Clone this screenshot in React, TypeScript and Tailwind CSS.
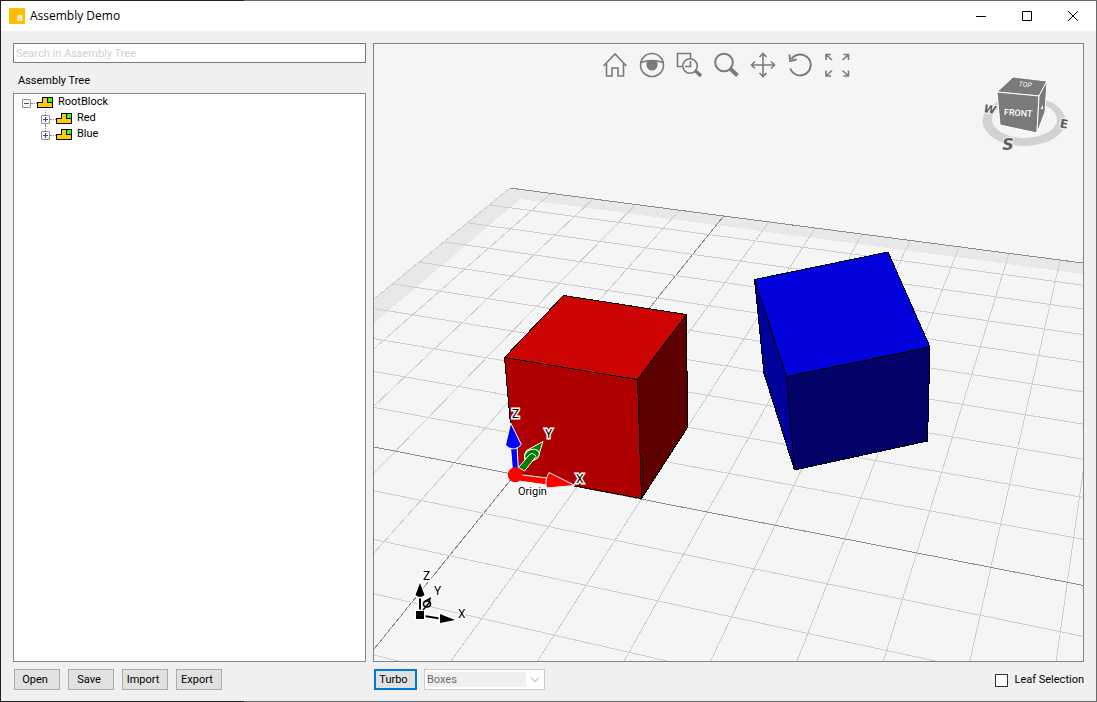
import React, { useState } from "react";

type Point = [number, number];

// perspective of the ground plane: grid units -> canvas units
const project = (x: number, y: number): Point => {
  const w = 1 - 0.01382 * x + 0.04347 * y;
  return [
    (54.29 * x + 52.33 * y + 515) / w,
    (5.43 * x - 16.46 * y + 474.5) / w,
  ];
};

const toPoints = (points: Point[]) => points.map((p) => p.join(",")).join(" ");

const range = (from: number, to: number) =>
  Array.from({ length: to - from + 1 }, (_, i) => from + i);

const GridLine = ({ from, to, color }: { from: Point; to: Point; color: string }) => (
  <line x1={from[0]} y1={from[1]} x2={to[0]} y2={to[1]} stroke={color} />
);

const Grid = () => (
  <g shapeRendering="crispEdges">
    <polygon
      fill="#e8e8e8"
      points={toPoints([
        project(-5, -4),
        project(-5, 10),
        project(9, 10),
        project(9, 9.5),
        project(-4.5, 9.5),
        project(-4.5, -4),
      ])}
    />
    {range(-5, 8).map((x) => (
      <GridLine
        key={`x${x}`}
        from={project(x, -6)}
        to={project(x, 10)}
        color={x === 0 ? "#8c8c8c" : "#cecece"}
      />
    ))}
    {range(-6, 10).map((y) => (
      <GridLine
        key={`y${y}`}
        from={project(-5, y)}
        to={project(10, y)}
        color={y === 0 || y === 10 ? "#8c8c8c" : "#cecece"}
      />
    ))}
  </g>
);

const Boxes = () => (
  <g stroke="#000" strokeLinejoin="round" shapeRendering="crispEdges">
    <polygon fill="#ae0000" points="504.500,357.500 637.500,379.500 641.500,498.500 515,475" />
    <polygon fill="#cd0404" points="504.500,357.500 563.500,295.500 686.500,314.500 637.500,379.500" />
    <polygon fill="#5c0000" points="637.500,379.500 686.500,314.500 687.500,427.500 641.500,498.500" />
    <polygon fill="#00009b" points="754.500,279.500 786.500,376.500 794.500,470 764,373.500" />
    <polygon fill="#0202dc" points="754.500,279.500 888,252 930,347 786.500,376.500" />
    <polygon fill="#020268" points="786.500,376.500 930,347 927.500,441 794.500,470" />
  </g>
);

const Label = ({ x, y, children }: { x: number; y: number; children: string }) => (
  <text
    x={x}
    y={y}
    fill="#000"
    stroke="#fff"
    strokeWidth="3"
    paintOrder="stroke"
    className="text-xs"
  >
    {children}
  </text>
);

const OriginAxes = () => (
  <g stroke="#fff">
    <path fill="#00f" d="M510.500 447h6.500l1.500 24h-6z" />
    <path fill="#00f" d="M510.700 423l10.600 21.500q-2 3.500-7.500 4.500-5.500 0-8.300-4z" />
    <path fill="#008000" d="M543 441.500l-16.500 9q-3.500 4-1.500 10l7 .5 6-3.500z" />
    <ellipse
      cx="532"
      cy="455"
      rx="7.500"
      ry="5.500"
      fill="#008000"
      transform="rotate(-20 532 455)"
    />
    <path fill="#008000" d="M518.500 467.500l11-13q4-2.500 6.500 2l-11.500 14.500z" />
    <path fill="#f00" d="M519 474.500l28 3.500v7l-28-4z" />
    <path fill="#f00" d="M549 472.500l26 13-28.500 2.500q-2-8 2.500-15.500z" />
    <circle cx="515.300" cy="474.700" r="7.500" fill="#f00" stroke="none" />
    <Label x={512} y={418}>Z</Label>
    <Label x={545} y={438}>Y</Label>
    <Label x={576} y={483}>X</Label>
    <text
      x="518"
      y="495"
      fill="#000"
      strokeWidth="3"
      paintOrder="stroke"
      className="text-[11px]"
    >
      Origin
    </text>
  </g>
);

const CornerAxes = () => (
  <g>
    <g fill="#000" stroke="#fff" strokeWidth="3" paintOrder="stroke">
      <path d="M419 596h2v17h-2z" />
      <path d="M420 583l4.500 12q-4.500 4-9 0z" />
      <path d="M421 614.500l19 3v2l-19-3z" />
      <path d="M440 614l15 6-15 3z" />
      <path d="M416 611h8v8h-8z" />
    </g>
    <g fill="none" stroke="#000" strokeWidth="1.500">
      <ellipse cx="427" cy="604" rx="3.500" ry="3" />
      <path d="M423 610l6-7M424 602l6-3.500-1 5" />
    </g>
    <Label x={423} y={580}>Z</Label>
    <Label x={434} y={595}>Y</Label>
    <Label x={458} y={618}>X</Label>
  </g>
);

const ViewCube = () => (
  <g>
    <path
      fill="#d2d2d2"
      fillRule="evenodd"
      d="M982.500 121a41.500 25 0 1 0 83 0a41.500 25 0 1 0-83 0zM992 119.500a32.500 18.500 0 1 0 65 0a32.500 18.500 0 1 0-65 0z"
    />
    <g fill="#7a7a7a" stroke="#fff" strokeLinejoin="round">
      <polygon points="997,92 1013,77 1047,81 1039,96" />
      <polygon points="997,92 1039,96 1037,133 1000,125" />
      <polygon points="1039,96 1047,81 1045,112 1037,133" />
    </g>
    <g fill="#fff" textAnchor="middle">
      <text x="1018" y="116" className="text-[9px] font-medium" transform="rotate(4 1018 116)">
        FRONT
      </text>
      <text x="1025" y="87" className="text-[7px] italic" transform="rotate(6 1025 87)">
        TOP
      </text>
      <path d="M1040.500 109l2.500-4v4z" />
    </g>
    <g
      fill="#5e5e5e"
      stroke="#f5f5f5"
      strokeWidth="2"
      paintOrder="stroke"
      textAnchor="middle"
    >
      <text x="1008" y="150" className="font-['DejaVu_Sans'] text-base font-bold italic">
        S
      </text>
      <text
        x="1064"
        y="128"
        className="font-['DejaVu_Sans'] text-xs font-bold"
        transform="rotate(10 1064 124)"
      >
        E
      </text>
      <text
        x="990"
        y="113"
        className="font-['DejaVu_Sans'] text-[11px] font-bold italic"
        transform="rotate(10 990 109)"
      >
        W
      </text>
    </g>
  </g>
);

const Scene = () => (
  <svg
    viewBox="374 44 709 617"
    preserveAspectRatio="xMidYMid slice"
    className="block h-full w-full"
    role="img"
    aria-label="3D view"
  >
    <Grid />
    <Boxes />
    <OriginAxes />
    <CornerAxes />
    <ViewCube />
  </svg>
);

const viewTools = [
  {
    name: "Home",
    icon: (
      <path d="M1.500 14L13 2l11.500 12M4.500 11.500V24H10v-8h6v8h5.500V11.500" />
    ),
  },
  {
    name: "Look",
    icon: (
      <>
        <circle cx="13" cy="13" r="11.500" />
        <path d="M1.800 10.500q11.200-4 22.400 0" />
        <path d="M7.500 9.500q5.500-2 11 0v3.500a5.500 5.500 0 0 1-11 0z" fill="currentColor" stroke="none" />
      </>
    ),
  },
  {
    name: "Zoom window",
    icon: (
      <>
        <path d="M6.500 14.500H1.500V1.500h13v5M14.500 9v5.500H9" />
        <circle cx="14" cy="14" r="7.200" />
        <path d="M19.500 19l5.500 5" strokeWidth="3.500" />
      </>
    ),
  },
  {
    name: "Zoom",
    icon: (
      <>
        <circle cx="11" cy="10.500" r="8.800" strokeWidth="2" />
        <path d="M17.500 17l7 6.500" strokeWidth="4" />
      </>
    ),
  },
  {
    name: "Pan",
    icon: (
      <path d="M13 1.500v23M1.500 13h23M9.500 5L13 1.500 16.500 5M9.500 21l3.500 3.500 3.500-3.500M5 9.500L1.500 13 5 16.500M21 9.500l3.500 3.500-3.500 3.500" />
    ),
  },
  {
    name: "Rotate",
    icon: (
      <path d="M3.300 16.500A10.500 10.500 0 1 0 4.500 7M2.500 2.500L3.200 9l6.500-1.500" strokeWidth="2" />
    ),
  },
  {
    name: "Zoom fit",
    icon: (
      <path
        d="M8 8L2.500 3M2 8V2.500h5M18.500 8L24 3M19.500 2.500h5V8M8 18.500L2.500 23.500M2 18.500V24h5M18.500 18.500l5.500 5M24.500 18.500V24h-5"
        strokeWidth="1.600"
      />
    ),
  },
];

const ViewToolbar = () => (
  <div className="absolute inset-x-0 top-2 flex justify-center gap-[11px] pr-[5px]">
    {viewTools.map((tool) => (
      <button key={tool.name} aria-label={tool.name} className="text-[#7b7b7b] hover:text-black">
        <svg
          viewBox="0 0 26 26"
          className="block size-[26px]"
          fill="none"
          stroke="currentColor"
          strokeWidth="1.600"
        >
          {tool.icon}
        </svg>
      </button>
    ))}
  </div>
);

const BlockIcon = () => (
  <svg viewBox="0 0 16 11" className="h-[11px] w-4" shapeRendering="crispEdges">
    <path fill="#000" d="M5 0h11v11H0V5h5z" />
    <path fill="#fc0" d="M6 1h4v5h5v4H1V6h5z" />
    <path fill="#3f0" d="M11 1h4v4h-4z" />
  </svg>
);

const Expander = ({ open, label, onClick }: { open: boolean; label: string; onClick?: () => void }) => (
  <button
    onClick={onClick}
    aria-expanded={open}
    aria-label={label}
    className="block size-[9px] rounded-[1px] border border-[#919191] bg-[#f6f6f6]"
  >
    <svg viewBox="0 0 7 7" className="block size-[7px]" stroke="#3c4f8f" shapeRendering="crispEdges">
      <path d={open ? "M1 3.500h5" : "M1 3.500h5M3.500 1v5"} />
    </svg>
  </button>
);

const TreeRow = ({
  name,
  open = false,
  child = false,
  last = false,
  onToggle,
}: {
  name: string;
  open?: boolean;
  child?: boolean;
  last?: boolean;
  onToggle?: () => void;
}) => (
  <div className={`flex h-4 items-center ${child ? "pl-[27px]" : "pl-2"}`}>
    <div className="flex h-4 w-[9px] flex-col items-center">
      <div className={`h-[5px] w-px ${child ? "border-l border-dotted border-[#888]" : ""}`} />
      <Expander open={open} label={`Toggle ${name}`} onClick={onToggle} />
      <div className={`h-0.5 w-px ${child && !last ? "border-l border-dotted border-[#888]" : ""}`} />
    </div>
    <div className="mt-[3px] w-1.5 border-t border-dotted border-[#888]" />
    <BlockIcon />
    <span className="pl-[5px]">{name}</span>
  </div>
);

const AssemblyTree = () => {
  const [isOpen, setIsOpen] = useState(true);

  return (
    <div className="flex-1 border border-[#828790] bg-white leading-4">
      <TreeRow name="RootBlock" open={isOpen} onToggle={() => setIsOpen(!isOpen)} />
      {isOpen && (
        <>
          <TreeRow name="Red" child />
          <TreeRow name="Blue" child last />
        </>
      )}
    </div>
  );
};

const TitleBar = () => (
  <header className="flex h-[30px] items-center bg-white pl-2">
    <div className="flex size-4 items-end justify-end bg-[#ffbf00] pr-0.5 text-[11px] leading-3 font-bold text-white">
      a
    </div>
    <h1 className="flex-1 pl-[5px] font-['Open_Sans',sans-serif] text-xs">Assembly Demo</h1>
    <div className="flex">
      {[
        { name: "Minimize", d: "M0 5.500h10" },
        { name: "Maximize", d: "M.5 .5h9v9h-9z" },
        { name: "Close", d: "M0 0l10 10M10 0L0 10" },
      ].map((control) => (
        <button
          key={control.name}
          aria-label={control.name}
          className="flex h-[30px] w-[46px] items-center justify-center hover:bg-gray-200"
        >
          <svg viewBox="0 0 10 10" className="size-2.5 overflow-visible" fill="none" stroke="#000">
            <path d={control.d} />
          </svg>
        </button>
      ))}
    </div>
  </header>
);

const FrameEdge = () => (
  <div className="flex h-px">
    <div className="w-[244px] bg-[#231f20]" />
    <div className="flex-1 bg-[#6b6b6b]" />
  </div>
);

const App = () => {
  const [leafSelection, setLeafSelection] = useState(false);

  return (
    <div className="flex h-screen flex-col bg-[#f0f0f0] font-[Roboto,Arial,sans-serif] text-[11px] text-black">
      <FrameEdge />
      <div className="flex min-h-0 flex-1 flex-col border-x border-l-[#231f20] border-r-[#6b6b6b]">
        <TitleBar />
        <main className="flex min-h-0 flex-1 gap-[7px] px-3 pt-3 pb-[11px]">
          <section className="flex w-[353px] shrink-0 flex-col">
            <input
              type="text"
              aria-label="Search in Assembly Tree"
              placeholder="Search in Assembly Tree"
              className="h-5 border border-[#7a7a7a] bg-white px-0.5 placeholder:text-[#d0d0d0]"
            />
            <h2 className="pt-2.5 pb-1 pl-[5px] leading-4">Assembly Tree</h2>
            <AssemblyTree />
            <div className="flex gap-2 px-px pt-[7px]">
              {["Open", "Save", "Import", "Export"].map((action) => (
                <button
                  key={action}
                  className="h-[21px] w-[46px] border border-[#adadad] bg-[#e1e1e1] pt-px pr-1 hover:bg-[#e5f1fb]"
                >
                  {action}
                </button>
              ))}
            </div>
          </section>
          <section className="flex min-w-0 flex-1 flex-col">
            <div className="relative min-h-0 flex-1 overflow-hidden border border-[#828282] bg-[#f5f5f5]">
              <Scene />
              <ViewToolbar />
            </div>
            <div className="flex items-center gap-[7px] pt-[7px] pl-px">
              <button className="h-[21px] w-[43px] border-2 border-[#0078d7] bg-[#e1e1e1] pt-px pr-1">
                Turbo
              </button>
              <div className="flex h-[21px] w-[121px] items-center border border-[#ccc] bg-white pl-0.5">
                <select
                  disabled
                  aria-label="Render mode"
                  className="h-[15px] w-[99px] appearance-none bg-[#f0f0f0] leading-[15px] text-[#6d6d6d] opacity-100"
                >
                  <option>Boxes</option>
                </select>
                <svg
                  viewBox="0 0 10 6"
                  className="ml-1 h-1.5 w-2.5"
                  fill="none"
                  stroke="#a0a0a0"
                >
                  <path d="M1 .5l4 4 4-4" />
                </svg>
              </div>
              <label className="ml-auto flex items-center gap-1.5 pt-px">
                <input
                  type="checkbox"
                  checked={leafSelection}
                  onChange={(e) => setLeafSelection(e.target.checked)}
                  className="size-[13px] appearance-none border border-[#333] bg-white checked:bg-[#0078d7]"
                />
                Leaf Selection
              </label>
            </div>
          </section>
        </main>
      </div>
      <FrameEdge />
    </div>
  );
};

export default App;
